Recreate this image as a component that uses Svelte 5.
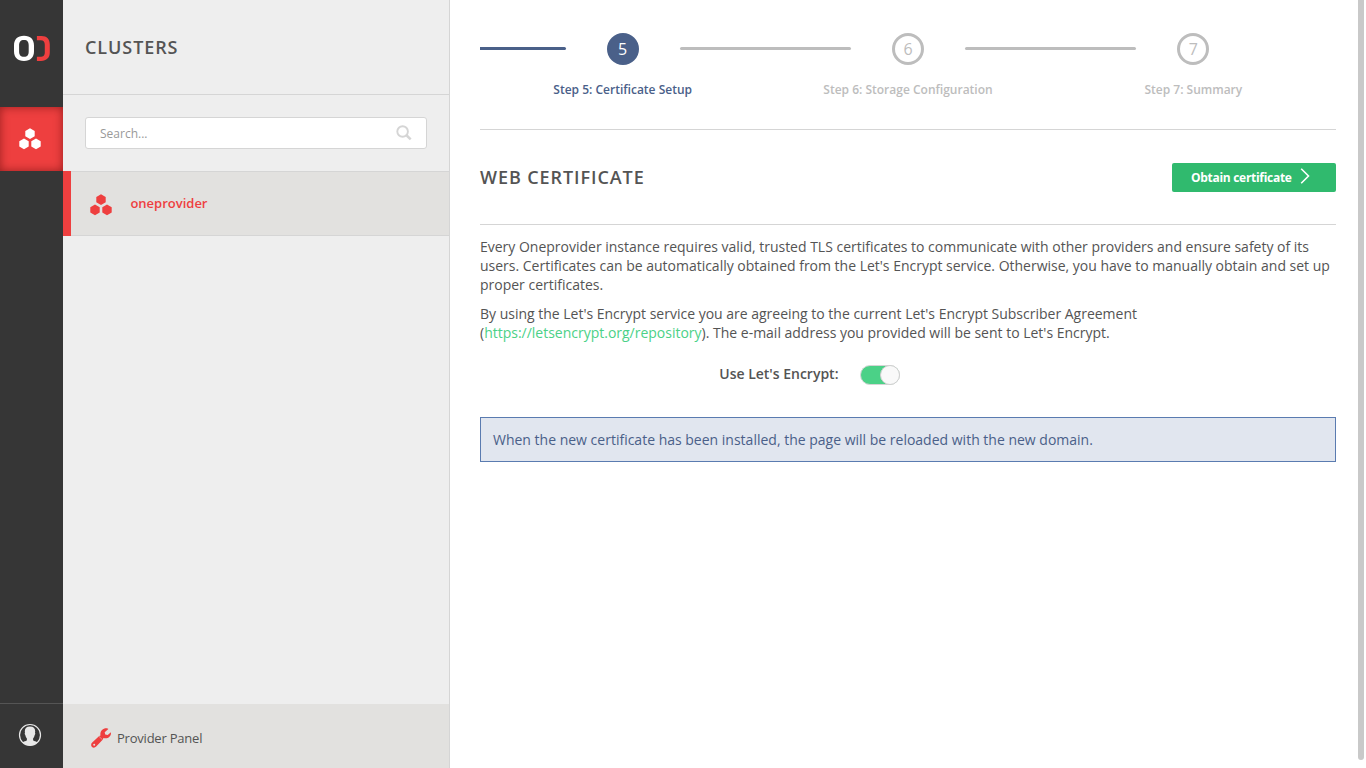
<script>
  const steps = [
    { number: 5, title: 'Step 5: Certificate Setup', active: true },
    { number: 6, title: 'Step 6: Storage Configuration', active: false },
    { number: 7, title: 'Step 7: Summary', active: false }
  ];
</script>

{#snippet clusterIcon()}
  <svg class="cluster-icon" width="22" height="22" viewBox="0 0 22 22" fill="currentColor">
    <path d="M11 .3 15.700 3v5.300L11 11 6.300 8.300V3zM5 10.600l4.700 2.700v5.300L5 21.300.3 18.600v-5.300zM17 10.600l4.700 2.700v5.300L17 21.300l-4.700-2.700v-5.300z" />
  </svg>
{/snippet}

<div class="app">
  <nav class="rail">
    <div class="logo">
      <svg width="38" height="28" viewBox="0 0 38 28">
        <path fill="#fff" fill-rule="evenodd" d="M11 1.800C17.600 1.800 21 5.500 21 11.500v5.800c0 6-3.400 9.700-10 9.700S1 23.300 1 17.300v-5.800C1 5.500 4.400 1.800 11 1.800zm0 4.200c-3.500 0-4.900 2-4.900 5.600v5.600c0 3.600 1.400 5.600 4.900 5.600s4.700-2 4.700-5.600v-5.600C15.700 8 14.500 6 11 6z" />
        <path fill="#ee3f3f" d="M23.900 2h4.600c5.500 0 8.300 3.200 8.300 8.700v7.600c0 5.500-3.200 8.600-8.700 8.600h-4.200v-4.200h3.300c3.300 0 4.600-1.500 4.600-4.800v-6.800c0-3.300-1.100-4.900-4.100-4.900h-3.800z" />
      </svg>
    </div>
    <div class="rail-item">{@render clusterIcon()}</div>
    <div class="account">
      <svg width="24" height="24" viewBox="0 0 24 24">
        <circle cx="12" cy="12" r="10.500" fill="none" stroke="#e8e8e8" stroke-width="1.200" />
        <path fill="#e8e8e8" d="M12 3.600c3.500 0 5.200 1.700 5.200 4.700 0 .7-.1 1.100-.2 1.500.5.300.3 1.600-.3 2.300-.3 1.600-.9 2.700-1.600 3.400v1.800c1 1 3 1.200 4.600 2.300A10.500 10.500 0 0 1 12 22.500a10.500 10.500 0 0 1-7.700-2.900c1.600-1.100 3.600-1.300 4.600-2.300v-1.800c-.7-.7-1.300-1.800-1.600-3.400-.6-.7-.8-2-.3-2.300-.1-.4-.2-.8-.2-1.500 0-3 1.700-4.700 5.200-4.700z" />
      </svg>
    </div>
  </nav>

  <aside class="sidebar">
    <header><h1>Clusters</h1></header>
    <div class="search-wrap">
      <label class="search">
        <input type="text" placeholder="Search..." />
        <svg width="16" height="16" viewBox="0 0 16 16" fill="none" stroke="#d5d5d5">
          <circle cx="6.600" cy="6.500" r="5.300" stroke-width="1.900" />
          <path d="m10.700 10.500 4 3.900" stroke-width="2.500" />
        </svg>
      </label>
    </div>
    <div class="cluster">{@render clusterIcon()}<span>oneprovider</span></div>
    <footer>
      <svg width="20" height="20" viewBox="0 0 20 20">
        <path fill="#ee3f3f" fill-rule="evenodd" d="M17.400 1 13.700 4.200l.5 2.400 2.500.5L19.900 4.300c.6 3.600-2.500 6.600-6.500 5.900l-1-.1-.5 1.500-6.700 7c-1.400 1.400-3.100 1.400-4.200.3-1.200-1.200-1.200-3 .2-4.300l7-6.600 1.300-.5C8.700 3.400 11.500.2 15.300.2c.8 0 1.900.3 2.100.8zM3.200 15.700a1 1 0 1 0 0 2 1 1 0 0 0 0-2z" />
        <path stroke="#e2e1df" stroke-width=".5" d="m8 8.400 3.600 3.500" />
      </svg>
      <span>Provider Panel</span>
    </footer>
  </aside>

  <main>
    <div class="content">
      <ol class="steps">
        {#each steps as step}
          <li class:active={step.active}>
            <div class="track">
              <i class="before"></i><b>{step.number}</b><i class="after"></i>
            </div>
            <span>{step.title}</span>
          </li>
        {/each}
      </ol>

      <div class="title-row">
        <h2>Web certificate</h2>
        <button>
          <span>Obtain certificate</span>
          <svg width="10" height="16" viewBox="0 0 10 16" fill="none" stroke="#fff" stroke-width="1.600"><path d="m1.200.8 7.300 7.200-7.300 7.200" /></svg>
        </button>
      </div>

      <p>Every Oneprovider instance requires valid, trusted TLS certificates to communicate with other providers and ensure safety of its users. Certificates can be automatically obtained from the Let's Encrypt service. Otherwise, you have to manually obtain and set up proper certificates.</p>
      <p>By using the Let's Encrypt service you are agreeing to the current Let's Encrypt Subscriber Agreement<br />(<a href="https://letsencrypt.org/repository">https://letsencrypt.org/repository</a>). The e-mail address you provided will be sent to Let's Encrypt.</p>

      <div class="option">
        <span>Use Let's Encrypt:</span>
        <div class="toggle" role="switch" aria-checked="true" tabindex="0"><i></i></div>
      </div>

      <div class="notice">When the new certificate has been installed, the page will be reloaded with the new domain.</div>
    </div>
    <div class="scrollbar"></div>
  </main>
</div>

<style>
  :global(body) { margin: 0; overflow: hidden; }
  * { box-sizing: border-box; }
  .app {
    display: flex;
    width: 1366px;
    height: 768px;
    font-family: "Open Sans", sans-serif;
    font-size: 14px;
    line-height: 19px;
    color: #545454;
    background: #fff;
  }
  svg { display: block; flex: none; }
  h1, h2, p, ol { margin: 0; padding: 0; }
  h1, h2 {
    font-size: 18px;
    line-height: 26px;
    font-weight: 600;
    letter-spacing: .920px;
    text-transform: uppercase;
  }

  .rail { width: 63px; display: flex; flex-direction: column; background: #363636; }
  .logo { height: 107px; padding: 34px 0 0 13px; }
  .rail-item {
    height: 64px;
    padding: 21px 0 0 19.400px;
    color: #fff;
    background: #ee3f3f;
    box-shadow: inset 0 0 10px rgba(70, 0, 0, .5);
  }
  .account {
    height: 65px;
    margin-top: auto;
    padding: 19px 0 0 18px;
    border-top: 1px solid #555;
  }

  .sidebar {
    width: 387px;
    display: flex;
    flex-direction: column;
    background: #eee;
    border-right: 1px solid #d5d5d5;
  }
  .sidebar header { height: 95px; padding: 34px 22px 0; border-bottom: 1px solid #d5d5d5; }
  .search-wrap { height: 76px; padding: 22px; }
  .search {
    height: 32px;
    display: flex;
    align-items: center;
    padding: 0 14px;
    background: #fff;
    border: 1px solid #d5d5d5;
    border-radius: 3px;
  }
  input {
    flex: 1;
    min-width: 0;
    padding: 2px 0 0;
    border: 0;
    outline: 0;
    background: none;
    font: 12px/18px "Open Sans", sans-serif;
  }
  input::placeholder { color: #999; opacity: 1; }
  .cluster {
    height: 65px;
    display: flex;
    align-items: center;
    gap: 18.400px;
    padding: 2px 0 0 19px;
    color: #ee3f3f;
    font-size: 13px;
    font-weight: 600;
    background: linear-gradient(#d5d5d5, #d5d5d5) top / 100% 1px no-repeat, #e2e1df;
    border-left: 8px solid #ee3f3f;
    box-shadow: inset 0 -1px #d5d5d5;
  }
  .cluster span { margin-top: -2px; }
  footer {
    height: 64px;
    margin-top: auto;
    display: flex;
    align-items: center;
    gap: 6px;
    padding: 4px 0 0 28px;
    font-size: 13px;
    letter-spacing: -.220px;
    background: #e2e1df;
  }

  main { flex: 1; display: flex; }
  .content { width: 908px; padding: 0 22px 0 30px; }
  .steps {
    height: 130px;
    display: grid;
    grid-template-columns: repeat(3, 1fr);
    padding-top: 33px;
    border-bottom: 1px solid #d5d5d5;
    list-style: none;
  }
  .content > * { width: 856px; }
  li { color: #bdbdbd; text-align: center; }
  li > span { display: block; margin-top: 16px; font-size: 12px; line-height: 18px; font-weight: 600; }
  .track { height: 32px; display: flex; align-items: center; justify-content: space-between; }
  .track i { width: 30%; height: 3px; margin-top: -1px; background: #bdbdbd; }
  .track .before { border-radius: 0 2px 2px 0; }
  .track .after { border-radius: 2px 0 0 2px; }
  li:last-child .after { visibility: hidden; }
  .track b {
    width: 32px;
    height: 32px;
    border: 3px solid #bdbdbd;
    border-radius: 50%;
    font-size: 16px;
    line-height: 26px;
    font-weight: 400;
  }
  .active { color: #4a6089; }
  .active .before { background: #4a6089; }
  .active b { color: #fff; background: #4a6089; border-color: #4a6089; }

  .title-row {
    height: 95px;
    display: flex;
    justify-content: space-between;
    align-items: center;
    border-bottom: 1px solid #d5d5d5;
  }
  button {
    width: 164px;
    height: 29px;
    display: flex;
    align-items: center;
    gap: 8px;
    padding: 0 0 0 19px;
    color: #fff;
    font: 700 12px/18px "Open Sans", sans-serif;
    letter-spacing: -.290px;
    white-space: nowrap;
    background: #30ba6e;
    border: 0;
    border-radius: 2px;
  }
  button span { padding-top: 2px; }
  button svg { margin-top: -2px; }
  p { margin-bottom: 10px; letter-spacing: -.008px; }
  .title-row + p { margin-top: 12px; }
  a { color: #4bd187; text-decoration: none; }
  .option { display: flex; align-items: center; margin-top: 21px; height: 22px; }
  .option span { width: 358.500px; margin: -2px 21.500px 0 0; text-align: right; font-weight: 600; }
  .toggle {
    width: 40px;
    height: 20px;
    display: flex;
    justify-content: flex-end;
    margin-top: 2px;
    background: #4bd187;
    border: 1px solid #d5d5d5;
    border-radius: 10px;
  }
  .toggle i {
    width: 20px;
    height: 20px;
    margin: -1px -1px 0 0;
    background: #f9f9f9;
    border: 1px solid #d0d0d0;
    border-radius: 50%;
  }
  .notice {
    height: 45px;
    margin-top: 32px;
    padding: 12px;
    color: #4a6089;
    background: #e1e6ef;
    border: 1px solid #5a7bb0;
  }
  .scrollbar { width: 6px; height: 760px; background: #c9c9c9; border-radius: 0 0 3px 3px; }
</style>
